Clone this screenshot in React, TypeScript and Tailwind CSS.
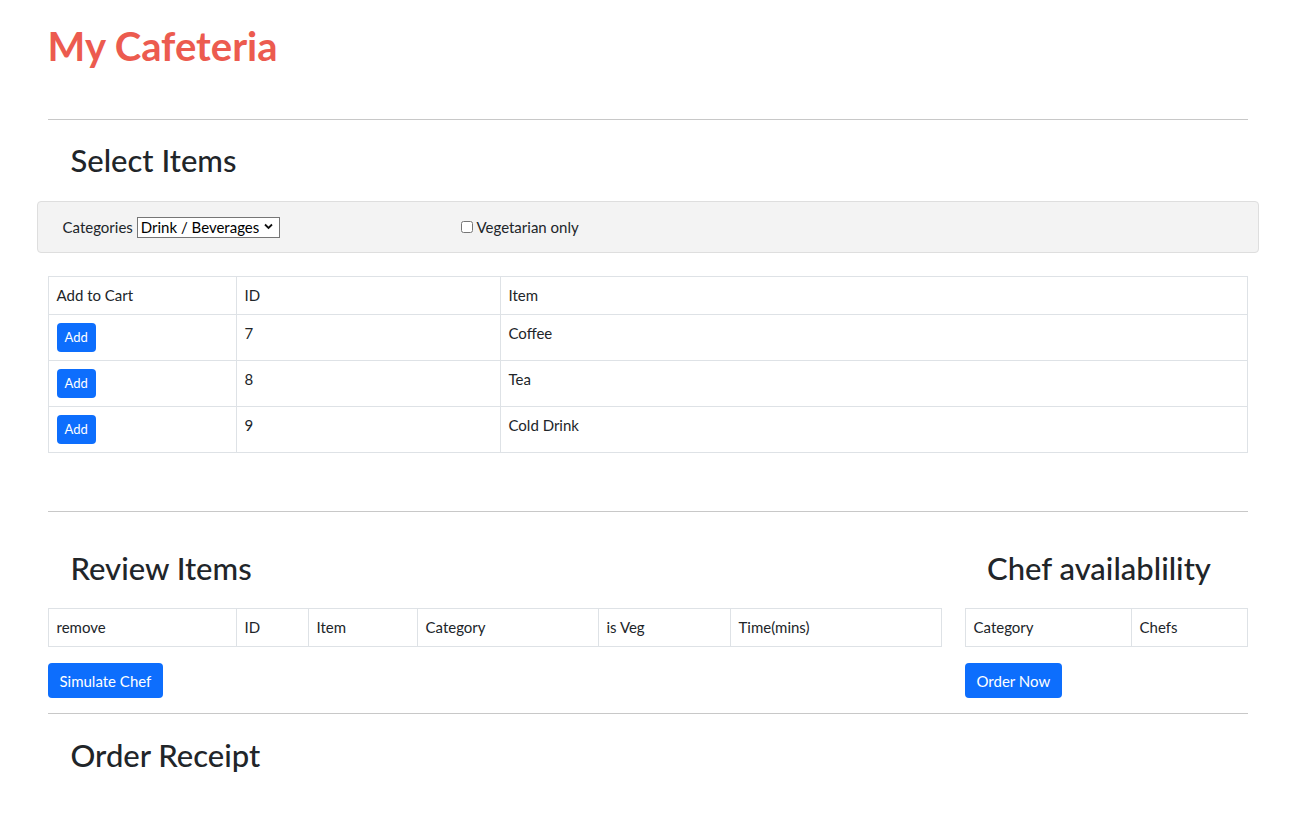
import React from "react";

const drinks = [
  { id: 7, name: "Coffee" },
  { id: 8, name: "Tea" },
  { id: 9, name: "Cold Drink" },
];

const Rule = () => <hr className="border-0 border-t border-[#c8c8c8]" />;

const Th = ({ children, className = "" }: { children?: React.ReactNode; className?: string }) => (
  <td className={`border border-[#dee2e6] px-2 py-2 align-top leading-[21px] ${className}`}>{children}</td>
);

const Btn = ({ children }: { children: React.ReactNode }) => (
  <button className="h-[35px] rounded-[4px] bg-[#0d6efd] px-3 text-[15px] text-white">{children}</button>
);

const App = () => {
  return (
    <div
      className="min-h-screen bg-white text-[15px] leading-[1.5] text-[#212529]"
      style={{ fontFamily: 'Lato, sans-serif' }}
    >
      <div className="mx-auto w-[1200px]">
        <h1 className="pt-[22px] pb-[49px] text-[40px] font-bold leading-[1.2] text-[#ec5b4f]">My Cafeteria</h1>
        <Rule />

        {/* Select items */}
        <h2 className="mt-[22px] mb-[22px] pl-[23px] text-[31px] font-medium leading-[1.2]">Select Items</h2>
        <div className="-mx-[11px] flex h-[52px] items-center rounded-[4px] border border-[#dedede] bg-[#f3f3f3] pl-[25px]">
          <div className="flex w-[398px] items-center">
            <span>Categories</span>
            <div className="relative ml-[4px]">
              <select className="h-[21px] w-[143px] appearance-none border border-[#767676] bg-white pl-[3px] text-[15px] leading-[19px] text-black outline-none">
                <option>Drink / Beverages</option>
              </select>
              <svg
                className="pointer-events-none absolute right-[7px] top-[7px]"
                width="9"
                height="7"
                viewBox="0 0 9 7"
              >
                <path d="M1 1.5 L4.5 5 L8 1.5" fill="none" stroke="#111" strokeWidth="1.8" />
              </svg>
            </div>
          </div>
          <label className="flex items-center gap-[4px]">
            <input type="checkbox" className="h-[12px] w-[12px]" />
            <span>Vegetarian only</span>
          </label>
        </div>

        <table className="mt-[23px] w-full border-collapse">
          <tbody>
            <tr className="h-[38px]">
              <Th className="w-[188px]">Add to Cart</Th>
              <Th className="w-[264px]">ID</Th>
              <Th>Item</Th>
            </tr>
            {drinks.map((d) => (
              <tr key={d.id} className="h-[45px]">
                <Th>
                  <button className="h-[29px] rounded-[4px] bg-[#0d6efd] px-2 text-[13px] text-white">Add</button>
                </Th>
                <Th>{d.id}</Th>
                <Th>{d.name}</Th>
              </tr>
            ))}
          </tbody>
        </table>

        <div className="mt-[58px]">
          <Rule />
        </div>

        {/* Review + chef */}
        <div className="flex gap-[23px] pt-[38px]">
          <div className="w-[894px]">
            <h2 className="mb-[21px] pl-[23px] text-[31px] font-medium leading-[1.2]">Review Items</h2>
            <table className="w-full border-collapse">
              <tbody>
                <tr className="h-[38px]">
                  <Th className="w-[188px]">remove</Th>
                  <Th className="w-[72px]">ID</Th>
                  <Th className="w-[109px]">Item</Th>
                  <Th className="w-[181px]">Category</Th>
                  <Th className="w-[132px]">is Veg</Th>
                  <Th>Time(mins)</Th>
                </tr>
              </tbody>
            </table>
            <div className="mt-[16px]">
              <Btn>Simulate Chef</Btn>
            </div>
          </div>
          <div className="flex-1">
            <h2 className="mb-[21px] pr-[14px] text-center text-[31px] font-medium leading-[1.2]">Chef availablility</h2>
            <table className="w-full border-collapse">
              <tbody>
                <tr className="h-[38px]">
                  <Th className="w-[166px]">Category</Th>
                  <Th>Chefs</Th>
                </tr>
              </tbody>
            </table>
            <div className="mt-[16px]">
              <Btn>Order Now</Btn>
            </div>
          </div>
        </div>

        <div className="mt-[15px]">
          <Rule />
        </div>
        <h2 className="mt-[23px] pl-[23px] text-[31px] font-medium leading-[1.2]">Order Receipt</h2>
      </div>
    </div>
  );
};

export default App;
